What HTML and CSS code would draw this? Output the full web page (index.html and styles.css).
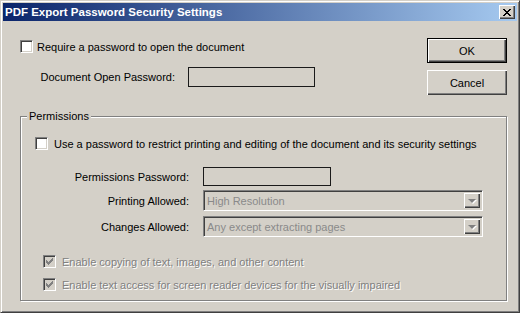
FILE: index.html
```html
<!DOCTYPE html>
<html lang="en">
<head>
    <meta charset="UTF-8">
    <title>PDF Export Password Security Settings</title>
    <link rel="stylesheet" href="styles.css">
</head>
<body>
    <div class="window">
        <div class="title-bar">
            <span class="title-text">PDF Export Password Security Settings</span>
            <span class="close-button">
                <svg width="8" height="7" viewBox="0 0 8 7"><path d="M0 0h2v1h1v1h2V1h1V0h2v1H7v1H6v1H5v1h1v1h1v1h1v1H6V6H5V5H3v1H2v1H0V6h1V5h1V4h1V3H2V2H1V1H0z" fill="#000"/></svg>
            </span>
        </div>

        <div class="content">
            <div class="top-section">
                <div class="open-settings">
                    <label class="check-row">
                        <span class="check"></span>
                        <span>Require a password to open the document</span>
                    </label>
                    <div class="field-row open-row">
                        <span class="field-label">Document Open Password:</span>
                        <span class="text-box open-box"></span>
                    </div>
                </div>
                <div class="buttons">
                    <button class="win-button default">OK</button>
                    <button class="win-button">Cancel</button>
                </div>
            </div>

            <div class="group">
                <span class="group-legend">Permissions</span>
                <label class="check-row">
                    <span class="check"></span>
                    <span>Use a password to restrict printing and editing of the document and its security settings</span>
                </label>

                <div class="field-row perm-row">
                    <span class="field-label perm-label">Permissions Password:</span>
                    <span class="text-box perm-box"></span>
                </div>
                <div class="field-row select-row">
                    <span class="field-label perm-label">Printing Allowed:</span>
                    <span class="select">
                        <span class="select-value">High Resolution</span>
                        <span class="select-arrow"><i></i></span>
                    </span>
                </div>
                <div class="field-row select-row">
                    <span class="field-label perm-label">Changes Allowed:</span>
                    <span class="select">
                        <span class="select-value">Any except extracting pages</span>
                        <span class="select-arrow"><i></i></span>
                    </span>
                </div>

                <div class="disabled-checks">
                    <label class="check-row disabled">
                        <span class="check checked"></span>
                        <span class="disabled-text">Enable copying of text, images, and other content</span>
                    </label>
                    <label class="check-row disabled">
                        <span class="check checked"></span>
                        <span class="disabled-text">Enable text access for screen reader devices for the visually impaired</span>
                    </label>
                </div>
            </div>
        </div>
    </div>
</body>
</html>
```

FILE: styles.css
```css
:root {
    --face: #d4d0c8;
    --shadow: #808080;
    --dark-shadow: #404040;
    --highlight: #ffffff;
    --gray-text: #808080;
}

* {
    box-sizing: border-box;
}

body {
    margin: 0;
    background-color: var(--face);
    font-family: "Liberation Sans", Arial, sans-serif;
    font-size: 11px;
    color: #000000;
}

.window {
    width: 520px;
    height: 313px;
    padding: 2px;
    background-color: var(--face);
    border: 1px solid;
    border-color: var(--face) var(--dark-shadow) var(--dark-shadow) var(--face);
    box-shadow: inset 1px 1px var(--highlight), inset -1px -1px var(--shadow);
    display: flex;
    flex-direction: column;
}

.title-bar {
    height: 18px;
    display: flex;
    align-items: center;
    justify-content: space-between;
    padding: 0 2px 0 2px;
    background: linear-gradient(to right, #0a246a, #a6caf0);
}

.title-text {
    color: #ffffff;
    font-weight: bold;
    font-size: 11.5px;
}

.close-button {
    width: 16px;
    height: 14px;
    display: flex;
    align-items: center;
    justify-content: center;
    background-color: var(--face);
    box-shadow: inset 1px 1px var(--highlight), inset -1px -1px var(--dark-shadow), inset -2px -2px var(--shadow);
}

.content {
    padding: 0 10px 0 17px;
}

.top-section {
    display: flex;
    justify-content: space-between;
}

.open-settings {
    padding-top: 19px;
}

.check-row {
    display: flex;
    align-items: center;
    height: 13px;
    gap: 4px;
    white-space: nowrap;
}

.check {
    width: 13px;
    height: 13px;
    flex: none;
    border: 1px solid;
    border-color: var(--shadow) var(--highlight) var(--highlight) var(--shadow);
    box-shadow: inset 1px 1px var(--dark-shadow), inset -1px -1px var(--face);
    background-color: #ffffff;
}

.check.checked {
    background-color: var(--face);
    background-image: url("data:image/svg+xml;utf8,<svg xmlns='http://www.w3.org/2000/svg' width='11' height='11' viewBox='0 0 11 11'><path d='M2 4h1v1h1v1h1V5h1V4h1V3h1V2h1v3H8v1H7v1H6v1H5v1H4V8H3V7H2z' fill='%23808080'/></svg>");
    background-repeat: no-repeat;
}

.field-row {
    display: flex;
    align-items: center;
}

.field-label {
    text-align: right;
    white-space: nowrap;
}

.open-row {
    margin-top: 14px;
}

.open-row .field-label {
    width: 155px;
    margin-right: 13px;
}

.text-box {
    display: block;
    border: 1px solid #1a1a1a;
}

.open-box {
    width: 127px;
    height: 20px;
}

.buttons {
    padding-top: 17px;
    display: flex;
    flex-direction: column;
    gap: 7px;
}

.win-button {
    width: 80px;
    height: 25px;
    padding: 0;
    font-family: inherit;
    font-size: 11px;
    color: #000000;
    background-color: var(--face);
    border: none;
    box-shadow: inset 1px 1px var(--highlight), inset -1px -1px var(--dark-shadow), inset -2px -2px var(--shadow);
}

.win-button.default {
    border: 1px solid #000000;
}

.group {
    position: relative;
    margin-top: 21px;
    width: 487px;
    height: 185px;
    border: 1px solid var(--shadow);
    box-shadow: inset 1px 1px var(--highlight), 1px 1px var(--highlight);
    padding: 20px 0 0 14px;
}

.group-legend {
    position: absolute;
    top: -7px;
    left: 6px;
    padding: 0 2px;
    background-color: var(--face);
    line-height: 13px;
}

.group .check-row {
    gap: 6px;
}

.perm-label {
    width: 168px;
    margin-right: 14px;
}

.perm-row {
    margin-top: 17px;
    margin-left: -14px;
}

.perm-box {
    width: 128px;
    height: 19px;
}

.select-row {
    margin-left: -14px;
    margin-top: 4px;
}

.select-row + .select-row {
    margin-top: 5px;
}

.select {
    width: 280px;
    height: 21px;
    display: flex;
    align-items: center;
    justify-content: space-between;
    padding: 2px;
    border: 1px solid;
    border-color: var(--shadow) var(--highlight) var(--highlight) var(--shadow);
    box-shadow: inset 1px 1px var(--dark-shadow), inset -1px -1px var(--face);
    background-color: var(--face);
}

.select-value {
    color: #8a8a8a;
    padding-left: 1px;
}

.select-arrow {
    width: 16px;
    height: 15px;
    display: flex;
    align-items: center;
    justify-content: center;
    box-shadow: inset 1px 1px var(--highlight), inset -1px -1px var(--dark-shadow), inset -2px -2px var(--shadow);
}

.select-arrow i {
    width: 0;
    height: 0;
    border-left: 4px solid transparent;
    border-right: 4px solid transparent;
    border-top: 4px solid var(--gray-text);
    filter: drop-shadow(1px 1px 0 var(--highlight));
}

.disabled-checks {
    margin-top: 18px;
    padding-left: 8px;
    display: flex;
    flex-direction: column;
    gap: 10px;
}

.disabled-text {
    color: var(--gray-text);
    text-shadow: 1px 1px 0 var(--highlight);
}
```
